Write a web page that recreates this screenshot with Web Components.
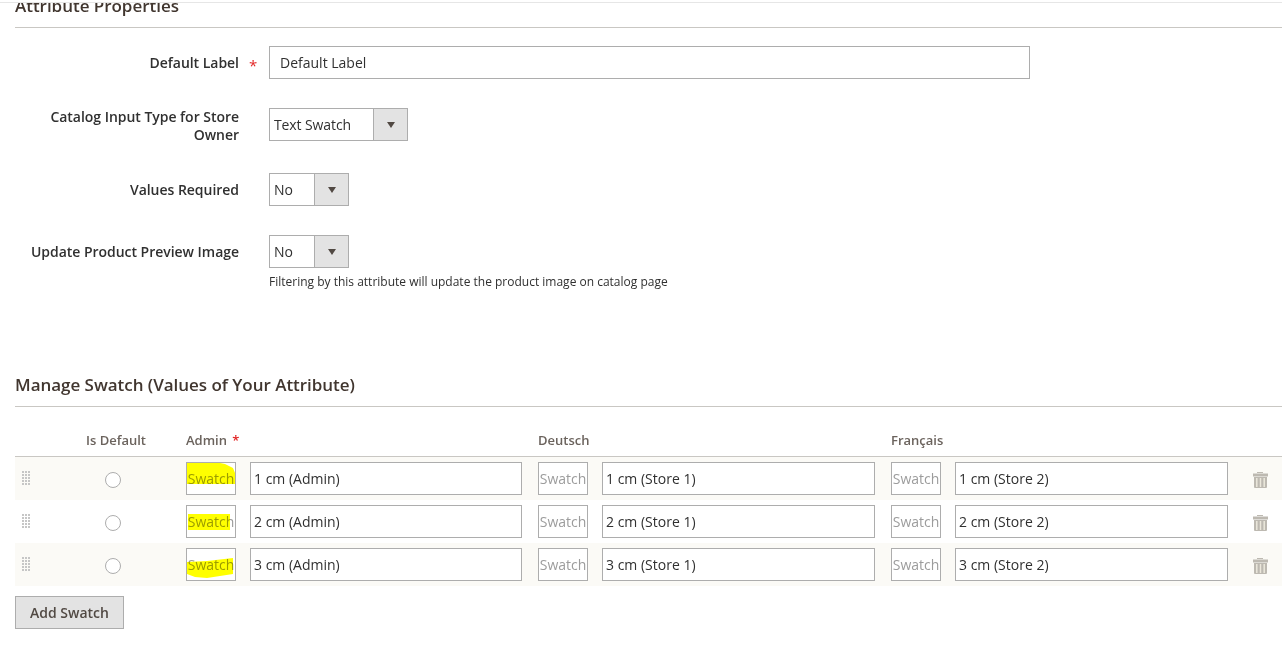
<!DOCTYPE html>
<html><head><meta charset="utf-8">
<style>
html,body{margin:0;padding:0;background:#fff;overflow:hidden}
body{width:1282px;height:645px;font-family:"Open Sans",sans-serif;color:#303030;font-size:14px}
</style></head><body>
<admin-page></admin-page>
<script>
const def=(name,html)=>{customElements.define(name,class extends HTMLElement{connectedCallback(){if(!this.shadowRoot)this.attachShadow({mode:'open'}).innerHTML=html(this)}})};
let dots='';for(let y=0;y<5;y++)for(let x=0;x<3;x++)dots+=`<rect x="${x*3}" y="${y*3}" width="2" height="2"/>`;
def('section-title',()=>`<style>:host{display:block;border-bottom:1px solid #c9c7c3;color:#41362f;font-weight:600;font-size:17px;letter-spacing:-.03px;line-height:23px;padding-bottom:10px}</style><slot></slot>`);
def('text-field',el=>`<style>:host{display:block;box-sizing:border-box;height:33px;border:1px solid #adadad;background:#fff;padding:0 ${el.getAttribute('pad')||'10px'};font-size:14px;line-height:31px;color:#303030;white-space:nowrap;overflow:hidden}</style><slot></slot>`);
def('select-field',el=>`<style>:host{display:flex;box-sizing:border-box;height:33px;width:${el.getAttribute('w')}px;border:1px solid #adadad;background:#fff;font-size:14px;letter-spacing:-.1px;line-height:31px;color:#303030}
.v{flex:1;padding-left:4px}.a{width:33px;border-left:1px solid #adadad;background:#e3e3e3;display:flex;align-items:center;justify-content:center}
svg{display:block}</style><div class="v"><slot></slot></div><div class="a"><svg width="8" height="6" viewBox="0 0 8 6"><path d="M0 0h8L4 6z" fill="#514943"/></svg></div>`);
def('form-row',el=>`<style>:host{display:grid;grid-template-columns:224px 30px 761px;align-items:start;margin-left:15px}
.l{font-weight:600;font-size:14px;letter-spacing:-.03px;line-height:18px;text-align:right;color:#303030;padding-top:${el.getAttribute('lp')||8}px}
.s{color:#e22626;font-size:15px;padding:10px 0 0 10px;line-height:18px}
::slotted(small){display:block;font-size:12px;line-height:16px;color:#303030;margin-top:6px}</style>
<div class="l">${el.getAttribute('label')}</div><div class="s">${el.hasAttribute('req')?'*':''}</div><div><slot></slot></div>`);
def('swatch-box',el=>`<style>:host{display:block;position:relative;box-sizing:border-box;width:50px;height:33px;border:1px solid #adadad;background:#fff;font-size:14px;line-height:31px;text-align:center;color:#9c9c9c;overflow:hidden}
svg{position:absolute;left:0;top:0;mix-blend-mode:multiply}</style><span>Swatch</span>${el.hasAttribute('hl')?`<svg width="48" height="31"><path d="${el.getAttribute('hl')}" fill="#ffff00"/></svg>`:''}`);
def('swatch-row',el=>{const vals=el.getAttribute('n'),hl=el.getAttribute('hl');
const cell=(s,h)=>`<div class="c"><swatch-box ${h?`hl="${h}"`:''}></swatch-box><text-field pad="3px">${vals} cm (${s})</text-field></div>`;
return `<style>:host{display:grid;grid-template-columns:171px 352px 353px 353px 1fr;height:43px;align-items:center;background:${el.hasAttribute('alt')?'#fbfaf6':'#fff'}}
.d{display:flex;align-items:center;padding-left:7px}
.c{display:grid;grid-template-columns:50px 1fr;column-gap:14px;padding-right:16px}
.g{display:block;fill:#c6c6c6;margin-top:-1px}
.r{box-sizing:border-box;width:16px;height:16px;border:1px solid #adadad;border-radius:50%;background:#fff;margin:2px 0 0 75px}
.x{padding-left:9px;display:flex}.x svg{display:block;margin-top:3px}</style>
<div class="d"><svg class="g" width="8" height="14" viewBox="0 0 8 14">${dots}</svg><div class="r"></div></div>${cell('Admin',hl)}${cell('Store 1')}${cell('Store 2')}
<div class="x"><svg width="15" height="16" viewBox="0 0 15 16"><path d="M4 0h6v1H4zM0 1.500h15V4.500H0zM1 5h13v10q0 1-1 1H2q-1 0-1-1z" fill="#bdb9b1"/><path d="M3.800 6v9M7.500 6v9M11.200 6v9" stroke="#ece8dc" stroke-width="1.500"/></svg></div>`});
def('admin-page',()=>`<style>:host{display:block;width:1282px;height:645px;overflow:hidden;position:relative}
.top{position:absolute;left:0;right:0;top:0;height:3px;background:#fff;border-bottom:1px solid #e6e6e6;box-sizing:border-box}
.h1{margin:-6px 0 0 15px}
.rows{display:flex;flex-direction:column}
.m{margin-left:15px}
.th{display:grid;grid-template-columns:171px 352px 353px 353px 1fr;height:50px;padding-top:24px;line-height:18px;align-items:start;border-bottom:1px solid #c9c7c3;font-size:13px;font-weight:600;color:#6b635d;box-sizing:border-box}
.th i{font-style:normal;color:#e22626;margin-left:2px}
.th div:first-child{padding-left:71px}
button{all:unset;box-sizing:border-box;display:block;width:109px;height:33px;background:#e3e3e3;border:1px solid #adadad;font:600 14px/31px "Open Sans",sans-serif;color:#514943;text-align:center}
</style>
<div class="top"></div>
<section-title class="h1">Attribute Properties</section-title>
<form-row req label="Default Label" style="margin-top:18px"><text-field>Default Label</text-field></form-row>
<form-row lp="0" label="Catalog Input Type for Store Owner" style="margin-top:29px"><select-field w="139">Text Swatch</select-field></form-row>
<form-row label="Values Required" style="margin-top:29px"><select-field w="80">No</select-field></form-row>
<form-row label="Update Product Preview Image" style="margin-top:29px"><select-field w="80">No</select-field><small>Filtering by this attribute will update the product image on catalog page</small></form-row>
<section-title class="m" style="margin-top:83px">Manage Swatch (Values of Your Attribute)</section-title>
<div class="m">
<div class="th"><div>Is Default</div><div>Admin <i>*</i></div><div>Deutsch</div><div>Français</div><div></div></div>
<div class="rows">
<swatch-row alt n="1" hl="M0 0H33L38 1L46 5L48 10V21H0Z"></swatch-row>
<swatch-row n="2" hl="M1 8H43V24H1Z"></swatch-row>
<swatch-row alt n="3" hl="M0 13L20 12L46 9V25L20 29L8 28L0 25Z"></swatch-row>
</div>
<button style="margin-top:10px">Add Swatch</button>
</div>`);
</script></body></html>
